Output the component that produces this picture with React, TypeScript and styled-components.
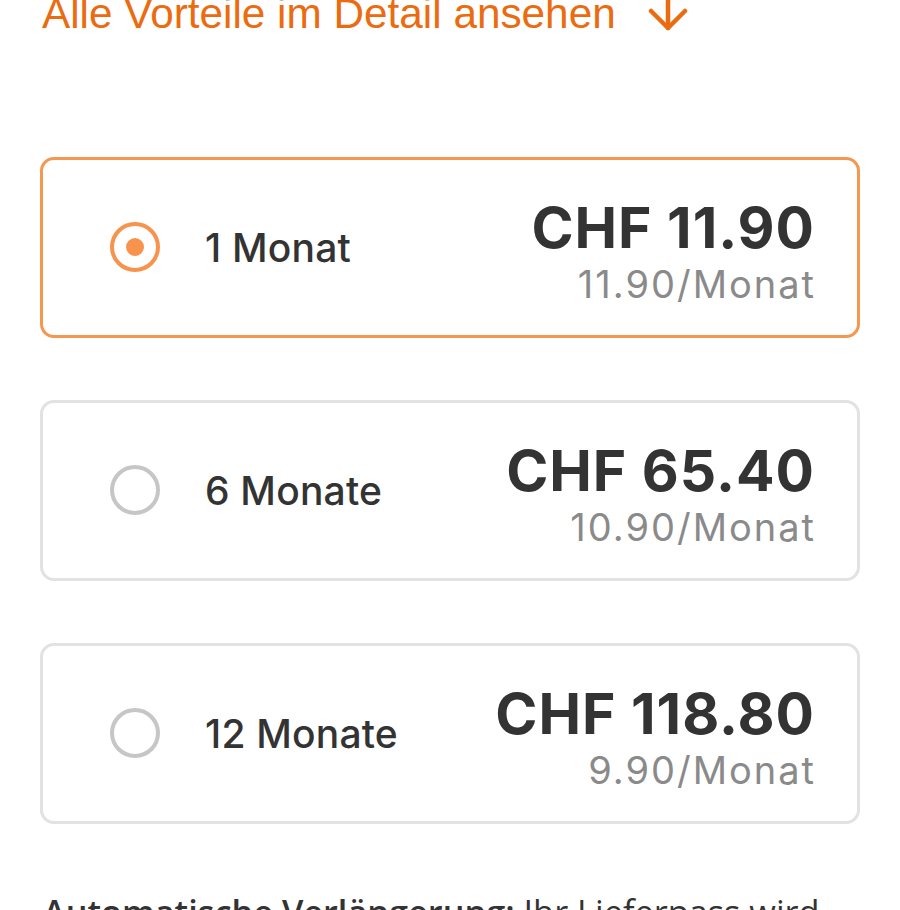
import React, { useState } from "react";
import styled, { createGlobalStyle } from "styled-components";

const Global = createGlobalStyle`
  html, body { margin: 0; padding: 0; background: #ffffff; }
  body { font-family: "Liberation Sans", Arial, sans-serif; overflow: hidden; }
`;

const Page = styled.div`
  padding: 0 40px;
  display: flex;
  flex-direction: column;
`;

const DetailLink = styled.a`
  margin-top: -11px;
  display: flex;
  align-items: center;
  gap: 32px;
  color: #eb6c10;
  font-size: 42.3px;
  line-height: 1.2;
  text-decoration: none;
  padding-left: 2px;
`;

const PlanList = styled.div`
  margin-top: 117px;
  display: flex;
  flex-direction: column;
  gap: 62px;
`;

const Card = styled.label<{ $active: boolean }>`
  box-sizing: border-box;
  height: 181px;
  display: flex;
  align-items: center;
  padding: 0 41px 0 67px;
  border: 3px solid ${(p) => (p.$active ? "#f4984f" : "#e2e2e2")};
  border-radius: 14px;
  cursor: pointer;
  font-family: Inter, "Liberation Sans", sans-serif;
`;

const Radio = styled.span<{ $active: boolean }>`
  box-sizing: border-box;
  width: 50px;
  height: 50px;
  border-radius: 50%;
  border: 4px solid ${(p) => (p.$active ? "#f7934c" : "#c6c6c6")};
  display: flex;
  align-items: center;
  justify-content: center;
  flex-shrink: 0;
  &::after {
    content: "";
    width: 18px;
    height: 18px;
    border-radius: 50%;
    background: #f7934c;
    display: ${(p) => (p.$active ? "block" : "none")};
  }
`;

const Duration = styled.span`
  margin-left: 45px;
  font-size: 39px;
  font-weight: 500;
  letter-spacing: 0.2px;
  color: #333333;
  flex: 1;
`;

const PriceBox = styled.div`
  display: flex;
  flex-direction: column;
  align-items: flex-end;
  gap: 6px;
  margin-top: 12px;
`;

const Price = styled.span`
  font-size: 57px;
  font-weight: 700;
  line-height: 1;
  color: #333333;
  letter-spacing: 1px;
  margin-right: 1px;
`;

const PerMonth = styled.span`
  font-size: 38px;
  line-height: 1.2;
  color: #8a8a8a;
  letter-spacing: 2px;
`;

const Note = styled.p`
  margin: 64px 0 0;
  padding-left: 3px;
  font-family: "Open Sans", "Liberation Sans", sans-serif;
  font-size: 34.3px;
  line-height: 1.4;
  color: #333333;
  strong { font-weight: 600; }
`;

const plans = [
  { id: 1, label: "1 Monat", price: "CHF 11.90", monthly: "11.90/Monat" },
  { id: 6, label: "6 Monate", price: "CHF 65.40", monthly: "10.90/Monat" },
  { id: 12, label: "12 Monate", price: "CHF 118.80", monthly: "9.90/Monat" },
];

export default function App() {
  const [selected, setSelected] = useState(1);
  return (
    <Page>
      <Global />
      <DetailLink href="#">
        <span>Alle Vorteile im Detail ansehen</span>
        <svg width="40" height="40" viewBox="0 0 40 40" fill="none" stroke="#eb6c10" strokeWidth="4.5" strokeLinecap="round" strokeLinejoin="round">
          <path d="M20 2v32" />
          <path d="M3 17l17 17 17-17" />
        </svg>
      </DetailLink>
      <PlanList>
        {plans.map((p) => (
          <Card key={p.id} $active={selected === p.id} onClick={() => setSelected(p.id)}>
            <Radio $active={selected === p.id} />
            <Duration>{p.label}</Duration>
            <PriceBox>
              <Price>{p.price}</Price>
              <PerMonth>{p.monthly}</PerMonth>
            </PriceBox>
          </Card>
        ))}
      </PlanList>
      <Note>
        <strong>Automatische Verlängerung:</strong> Ihr Lieferpass wird automatisch verlängert, sofern Sie ihn nicht vorher kündigen.
      </Note>
    </Page>
  );
}
